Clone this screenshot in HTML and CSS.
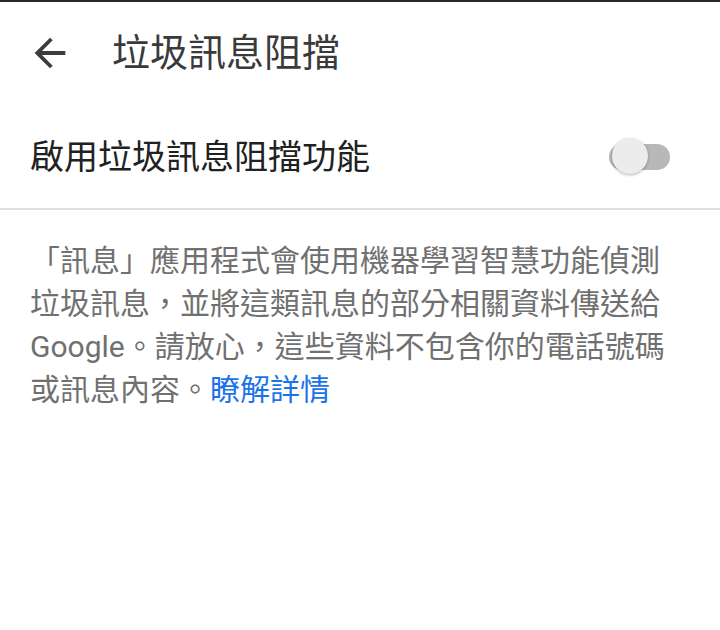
FILE: index.html
```html
<!DOCTYPE html>
<html lang="zh-Hant">
<head>
<meta charset="utf-8">
<link rel="stylesheet" href="styles.css">
</head>
<body>
<div class="screen">
  <header class="appbar">
    <svg class="back" viewBox="0 0 24 24" width="46" height="46"><path d="M20 11H7.83l5.59-5.59L12 4l-8 8 8 8 1.41-1.41L7.83 13H20v-2z" fill="#3c3c3c"/></svg>
    <h1 class="title">垃圾訊息阻擋</h1>
  </header>
  <div class="row">
    <span class="row-label">啟用垃圾訊息阻擋功能</span>
    <span class="switch"><span class="track"></span><span class="thumb"></span></span>
  </div>
  <div class="divider"></div>
  <p class="desc">「訊息」應用程式會使用機器學習智慧功能偵測垃圾訊息，並將這類訊息的部分相關資料傳送給 Google。請放心，這些資料不包含你的電話號碼或訊息內容。<a class="link">瞭解詳情</a></p>
</div>
</body>
</html>
```
FILE: styles.css
```css
html, body {
  margin: 0;
  padding: 0;
  background: #fff;
}
.screen {
  width: 720px;
  height: 630px;
  border-top: 2px solid #2a2a2a;
  box-sizing: border-box;
  font-family: Roboto, "Noto Sans CJK TC", sans-serif;
  overflow: hidden;
}
.appbar {
  height: 101px;
  display: flex;
  align-items: center;
}
.back {
  margin-left: 27px;
  flex: none;
}
.title {
  margin: 0 0 0 39px;
  font-size: 38px;
  font-weight: 400;
  color: #3a3a3a;
  line-height: 1;
}
.row {
  height: 105px;
  display: flex;
  align-items: center;
  justify-content: space-between;
  padding: 2px 50px 0 30px;
  box-sizing: border-box;
}
.row-label {
  font-size: 34px;
  color: #212121;
  line-height: 1;
}
.switch {
  position: relative;
  width: 61px;
  height: 38px;
  flex: none;
}
.track {
  position: absolute;
  left: 0;
  right: 0;
  top: 6px;
  height: 26px;
  border-radius: 13px;
  background: #b8b8b8;
}
.thumb {
  position: absolute;
  left: 3px;
  top: 0;
  width: 36px;
  height: 36px;
  border-radius: 50%;
  background: #ececec;
  box-shadow: 0 1px 3px rgba(0,0,0,0.3);
}
.divider {
  height: 2px;
  background: #e0e0e0;
}
.desc {
  margin: 0;
  padding: 29px 50px 0 30px;
  font-size: 30px;
  line-height: 43px;
  color: #707070;
}
.link {
  color: #1a73e8;
}
```
